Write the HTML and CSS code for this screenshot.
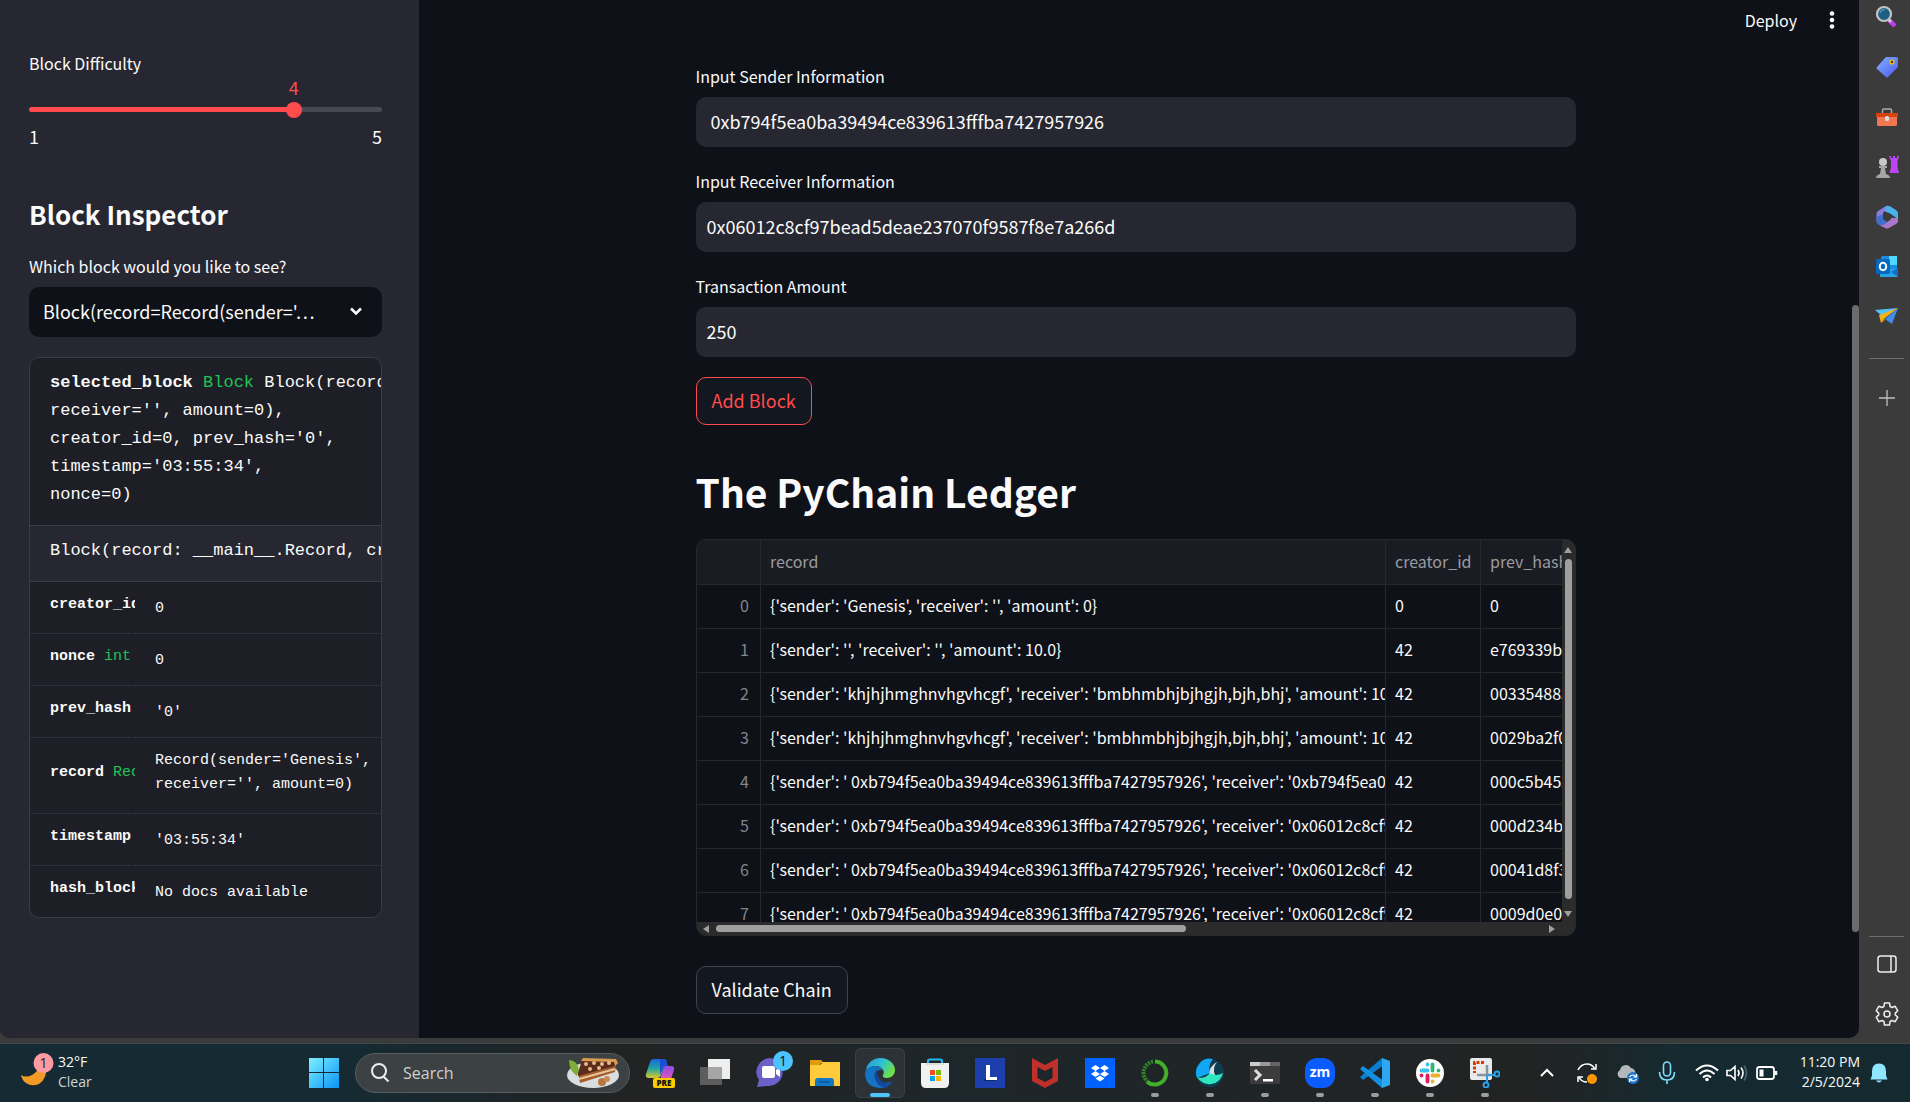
FILE: index.html
```html
<!DOCTYPE html>
<html lang="en">
<head>
<meta charset="utf-8">
<title>PyChain</title>
<link rel="stylesheet" href="styles.css">
</head>
<body>
<div class="desktop">
  <div class="browser">
    <div class="page">
      <aside class="sidebar">
        <div class="slider">
          <label for="difficulty">Block Difficulty</label>
          <div class="rail" style="--fill: 75%">
            <output for="difficulty">4</output>
            <input type="range" id="difficulty" min="1" max="5" value="4">
          </div>
          <div class="ticks"><span>1</span><span>5</span></div>
        </div>
        <h2>Block Inspector</h2>
        <label for="block">Which block would you like to see?</label>
        <div class="select">
          <select id="block"><option>Block(record=Record(sender='…</option></select>
          <svg viewBox="0 0 16 16" width="16" height="16"><path d="M3 5.5 8 10.500l5-5" fill="none" stroke="#fafafa" stroke-width="2.600"/></svg>
        </div>
        <section class="doc">
          <pre class="value"><b>selected_block</b> <i>Block</i> Block(record=Record(sender='Genesis',
receiver='', amount=0),
creator_id=0, prev_hash='0',
timestamp='03:55:34',
nonce=0)</pre>
          <pre class="signature">Block(record: __main__.Record, creator_id: int)</pre>
          <table class="members">
            <tr><th scope="row">creator_id</th><td>0</td></tr>
            <tr><th scope="row">nonce <i>int</i></th><td>0</td></tr>
            <tr><th scope="row">prev_hash</th><td>'0'</td></tr>
            <tr><th scope="row">record <i>Record</i></th><td class="multi">Record(sender='Genesis',<br>receiver='', amount=0)</td></tr>
            <tr><th scope="row">timestamp</th><td>'03:55:34'</td></tr>
            <tr><th scope="row">hash_block</th><td>No docs available</td></tr>
          </table>
        </section>
      </aside>

      <main class="main">
        <header class="toolbar">
          <button type="button" class="plain">Deploy</button>
          <button type="button" class="plain kebab" aria-label="Menu"><svg viewBox="0 0 6 18" width="6" height="18" fill="#fafafa"><circle cx="3" cy="2.500" r="2.300"/><circle cx="3" cy="9" r="2.300"/><circle cx="3" cy="15.500" r="2.300"/></svg></button>
        </header>
        <div class="content">
          <div class="field"><label for="sender">Input Sender Information</label><input type="text" id="sender" value=" 0xb794f5ea0ba39494ce839613fffba7427957926"></div>
          <div class="field"><label for="receiver">Input Receiver Information</label><input type="text" id="receiver" value="0x06012c8cf97bead5deae237070f9587f8e7a266d"></div>
          <div class="field"><label for="amount">Transaction Amount</label><input type="text" id="amount" value="250"></div>
          <button type="button" class="btn active">Add Block</button>
          <h1>The PyChain Ledger</h1>
          <div class="grid">
            <div class="grid-view">
              <table class="ledger">
                <colgroup><col class="c-index"><col><col class="c-creator"><col class="c-hash"></colgroup>
                <thead><tr><th></th><th>record</th><th>creator_id</th><th>prev_hash</th></tr></thead>
                <tbody>
                  <tr><td>0</td><td>{'sender': 'Genesis', 'receiver': '', 'amount': 0}</td><td>0</td><td>0</td></tr>
                  <tr><td>1</td><td>{'sender': '', 'receiver': '', 'amount': 10.0}</td><td>42</td><td>e769339bf</td></tr>
                  <tr><td>2</td><td>{'sender': 'khjhjhmghnvhgvhcgf', 'receiver': 'bmbhmbhjbjhgjh,bjh,bhj', 'amount': 10.0}</td><td>42</td><td>003354885</td></tr>
                  <tr><td>3</td><td>{'sender': 'khjhjhmghnvhgvhcgf', 'receiver': 'bmbhmbhjbjhgjh,bjh,bhj', 'amount': 10.0}</td><td>42</td><td>0029ba2f0</td></tr>
                  <tr><td>4</td><td>{'sender': ' 0xb794f5ea0ba39494ce839613fffba7427957926', 'receiver': '0xb794f5ea0ba</td><td>42</td><td>000c5b453</td></tr>
                  <tr><td>5</td><td>{'sender': ' 0xb794f5ea0ba39494ce839613fffba7427957926', 'receiver': '0x06012c8cf97</td><td>42</td><td>000d234b</td></tr>
                  <tr><td>6</td><td>{'sender': ' 0xb794f5ea0ba39494ce839613fffba7427957926', 'receiver': '0x06012c8cf97</td><td>42</td><td>00041d8f3</td></tr>
                  <tr><td>7</td><td>{'sender': ' 0xb794f5ea0ba39494ce839613fffba7427957926', 'receiver': '0x06012c8cf97</td><td>42</td><td>0009d0e07</td></tr>
                </tbody>
              </table>
            </div>
            <div class="bar-y"><svg viewBox="0 0 10 8" width="10" height="8"><path d="M5 1 9 7H1z"/></svg><span></span><svg viewBox="0 0 10 8" width="10" height="8"><path d="M5 7 9 1H1z"/></svg></div>
            <div class="bar-x"><svg viewBox="0 0 8 10" width="8" height="10"><path d="M1 5 7 1v8z"/></svg><span></span><svg viewBox="0 0 8 10" width="8" height="10"><path d="M7 5 1 1v8z"/></svg></div>
          </div>
          <button type="button" class="btn">Validate Chain</button>
        </div>
      </main>
      <div class="page-scroll"><span></span></div>
    </div>

    <nav class="edgebar">
      <svg viewBox="0 0 24 24"><path d="m14 15 6 6" stroke="#c03cf5" stroke-width="4.500"/><path d="m13.500 14.500 2.500 2.500" stroke="#ccc" stroke-width="3"/><circle cx="9" cy="9" r="7" fill="#1d5f82" stroke="#c4c4c4" stroke-width="2.200"/><path d="M5 8a5 5 0 0 1 5-3.500" stroke="#4c94b5" stroke-width="1.500" fill="none"/></svg>
      <svg viewBox="0 0 24 24"><defs><linearGradient id="tag" x2="1" y2="1"><stop stop-color="#7cb4ff"/><stop offset="1" stop-color="#5257f0"/></linearGradient></defs><path d="M12 2h9q2 0 2 2v7q0 1-1 2L13 22q-1 1-2 0l-9-8q-1-1 0-2l8-9q1-1 2-1z" fill="url(#tag)"/><circle cx="17" cy="7" r="2.600" fill="#f4c20d"/><circle cx="17" cy="7" r="1.200" fill="#333"/></svg>
      <svg viewBox="0 0 24 24"><path d="M7.500 8V5.500Q7.500 4 9 4h6q1.500 0 1.500 1.500V8" fill="none" stroke="#aaa" stroke-width="1.500"/><path d="M2 11h20v8.500q0 1.500-1.500 1.500h-17Q2 21 2 19.500z" fill="#f07850"/><path d="M1 8h22v4H1z" fill="#d6430f"/><rect x="10" y="11" width="4" height="5" rx="1.500" fill="#ddd"/></svg>
      <svg viewBox="0 0 24 24"><path d="M14 1h2v2h2V1h2v2h2V1h2l-1.500 5.500v6L24 18h-9.500l1.500-5.500v-6z" fill="#bb44f5"/><circle cx="8" cy="7" r="4" fill="#c9c9c9"/><path d="M4 11h8v2h-2l1 6q4 1 4 4H1q0-3 4-4l1-6H4z" fill="#a5a5a5"/></svg>
      <svg viewBox="0 0 24 24"><path d="M11 1 3 6Q1.500 7 1.500 9v7q0 2 1.500 3l5 3V9q0-2 2-3l3-2z" fill="#8b7de0"/><path d="M11 1q2-.8 4 .3l6 3.700q2 1 2 3.500V14l-8-5.500-5-2z" fill="#49b1ee"/><path d="M16 13l7 0v3q0 2-2 3l-7 4q-2 1-4 0l-4-2 6-4q4-2 4-4z" fill="#a877cc"/><path d="M1.500 12v4q0 2.500 2 3.500 3 1.500 6-.5l3-2-4.500-3V9z" fill="#416fd0"/><path d="m12 8 4 2v4l-4 2.500L8.500 14v-4z" fill="#3b3b3b"/></svg>
      <svg viewBox="0 0 24 24"><rect x="6" y="1" width="16" height="21" rx="1.500" fill="#1a8fdc"/><path d="M14 1h8v9h-8z" fill="#4fd8ff"/><path d="M5 14h18v8H5z" fill="#27a5e8"/><path d="m16 17 7-4v9z" fill="#0f72c4"/><rect x="1" y="4" width="14" height="15" rx="1.500" fill="#0668bf"/><ellipse cx="8" cy="11.500" rx="3.200" ry="3.700" fill="none" stroke="#fff" stroke-width="2"/></svg>
      <svg viewBox="0 0 24 24"><path d="M0 5 23 3 7 11z" fill="#4fc3f7"/><path d="M23 3 17 19l-7-5z" fill="#3f8cf0"/><path d="M23 3 4 10l2 8 4-5z" fill="#f6b21b"/><path d="m6 18 4-3-1-2z" fill="#c98500"/></svg>
      <hr>
      <svg viewBox="0 0 24 24" stroke="#c0c0c0" stroke-width="1.300"><path d="M12 4v16M4 12h16"/></svg>
      <hr class="low">
      <svg viewBox="0 0 24 24" fill="none" stroke="#eee" stroke-width="1.500"><rect x="3" y="4" width="18" height="16" rx="2.500"/><path d="M16 4v16"/></svg>
      <svg viewBox="0 0 24 24" fill="none" stroke="#eee" stroke-width="1.500" stroke-linejoin="round"><path d="M9.500 1h5l.6 3.500 1.900 1 3.200-1.200 2.600 4.500-2.500 2.300v1.800l2.500 2.300-2.600 4.500-3.200-1.200-1.900 1-.6 3.500h-5l-.6-3.500-1.900-1-3.200 1.200-2.600-4.500 2.500-2.300v-1.800L1.200 8.800l2.600-4.500L7 5.500l1.900-1z"/><circle cx="12" cy="12" r="3"/></svg>
    </nav>
  </div>

  <footer class="taskbar">
    <div class="weather">
      <svg viewBox="0 0 34 40" width="34" height="40"><path d="M26 13q2 13-7 19-7 3-13-1-4-3-5-8 5 3 11 0 6-3 7-10z" fill="#f39a25"/><circle cx="23.500" cy="11" r="10" fill="#ff9aa2"/><text x="23.500" y="16" text-anchor="middle" font-size="14" fill="#222">1</text></svg>
      <p>32°F<br><span>Clear</span></p>
    </div>
    <div class="apps">
      <svg class="start" viewBox="0 0 30 30" width="30" height="30"><defs><linearGradient id="win" x2="1" y2="1"><stop stop-color="#7cf0ff"/><stop offset="1" stop-color="#0a93f5"/></linearGradient></defs><path d="M0 0h14v14H0zM15 0h15v14H15zM0 15h14v15H0zM15 15h15v15H15z" fill="url(#win)"/></svg>
      <div class="search">
        <svg viewBox="0 0 20 20" width="20" height="20" fill="none" stroke="#eee" stroke-width="2"><circle cx="9" cy="8" r="7"/><path d="m13.500 13.500 5 5"/></svg>
        <input type="search" aria-label="Search" placeholder="Search">
        <svg viewBox="0 0 54 32" width="54" height="32"><ellipse cx="27" cy="18" rx="26" ry="13" fill="#d9dde0"/><path d="M3 3q8 0 10 10l-2 6Q3 14 3 3z" fill="#7fae35"/><path d="M12 16 50 6l-1 9-35 11z" fill="#a35c2a"/><path d="M12 16 16 3l35-1-2 7-37 10z" fill="#5b2c1b"/><path d="m15 4 2-3 33 1 2 4-3 3-1-4z" fill="#d99b52"/><path d="m13 22 36-10" stroke="#e8c79a" stroke-width="2"/><g fill="#e5b98c"><circle cx="20" cy="7" r="2"/><circle cx="28" cy="6" r="2"/><circle cx="36" cy="7" r="2"/><circle cx="24" cy="12" r="2"/><circle cx="33" cy="11" r="2"/><circle cx="43" cy="6" r="2"/></g><circle cx="36" cy="25" r="4" fill="#b9773e"/><circle cx="41" cy="22" r="3" fill="#c98b50"/></svg>
      </div>
      <span class="app"><svg viewBox="0 0 30 30"><defs><linearGradient id="co" x2="0" y2="1"><stop stop-color="#1667e0"/><stop offset=".5" stop-color="#21a6a0"/><stop offset="1" stop-color="#d8c82e"/></linearGradient><linearGradient id="co2" x2="0" y2="1"><stop stop-color="#8a4cf0"/><stop offset="1" stop-color="#f25ba8"/></linearGradient></defs><path d="M9 1h10q3 0 2 3l-5 13q-1 3-4 3H4q-4 0-3-4L5 4q1-3 4-3z" fill="url(#co)"/><path d="M20 8h6q4 0 3 4l-3 9q-1 3-4 3h-8l4-12q1-4 2-4z" fill="url(#co2)"/><path d="M15 1h4q3 0 3 4l1 3h-4l-4 9z" fill="#1c4fd0"/><rect x="8" y="20" width="22" height="10" rx="2" fill="#fc0"/><text x="19" y="28" text-anchor="middle" font-size="8" font-weight="800" fill="#111">PRE</text></svg></span>
      <span class="app"><svg viewBox="0 0 30 30"><path d="M0 9h22v18H0z" fill="#5d5d5d"/><path d="M8 1h22v20H8z" fill="#eee"/><path d="M8 9h14v12H8z" fill="#a5a5a5"/></svg></span>
      <span class="app"><svg class="wide" viewBox="0 0 38 38"><path d="M15 8a14 14 0 1 1-3 28l-10 1 2-7A14 14 0 0 1 15 8z" fill="#6a62c8"/><rect x="7" y="16" width="13" height="12" rx="2" fill="#fff"/><path d="m21 20 4-3v10l-4-3z" fill="#fff"/><circle cx="28" cy="11" r="10" fill="#4cc2ff"/><text x="28" y="16" text-anchor="middle" font-size="14" fill="#111">1</text></svg></span>
      <span class="app"><svg viewBox="0 0 30 30"><path d="M0 2h11l3 3h-3L9 8H0z" fill="#e09b0c"/><path d="M0 7h10l3-3h17v24H0z" fill="#ffcb3d"/><path d="M5 28v-5q0-3 3-3h13q3 0 3 3v5z" fill="#0f78c8"/><path d="M9 24h11" stroke="#064b80" stroke-width="1.200"/></svg></span>
      <span class="app current"><svg viewBox="0 0 30 30"><defs><linearGradient id="ed" x2="1" y2=".5"><stop stop-color="#2493e0"/><stop offset=".55" stop-color="#2cc4d0"/><stop offset="1" stop-color="#6ee048"/></linearGradient></defs><path d="M1 12C2 5 8 0 15 0c9 0 15 6 15 12 0 5-4 8-8 8-3 0-5-1-4-3 2-3 0-8-6-9q-7 0-11 4z" fill="url(#ed)"/><path d="M0 15q2-7 11-7 5 1 7 4-6-1-7 4-1 9 9 9l7-1q-4 6-12 6Q0 29 0 15z" fill="#1673c4"/><path d="M12 11q-4 5-2 10 3 8 10 9 5-2 8-6-8 3-13-2-4-5-3-11z" fill="#114a9c"/></svg></span>
      <span class="app"><svg viewBox="0 0 30 30"><path d="M8 8V3q0-1.500 1.500-1.500h11Q22 1.500 22 3v5" fill="none" stroke="#2bb3f0" stroke-width="2.200"/><path d="M1 5h28v20q0 5-5 5H6q-5 0-5-5z" fill="#f1f1f1"/><path d="M10 12h5v5h-5z" fill="#f25022"/><path d="M16 12h5v5h-5z" fill="#7fba00"/><path d="M10 18h5v5h-5z" fill="#00a4ef"/><path d="M16 18h5v5h-5z" fill="#ffb900"/><path d="M6 5h18v2H6z" fill="#ddd"/></svg></span>
      <span class="app"><svg viewBox="0 0 30 30"><path d="M0 0h30v30H0z" fill="#1d3fae"/><path d="m8 23 4-4h9v4z" fill="#122b66"/><path d="M11 7h4v12h7v3H11z" fill="#fff"/></svg></span>
      <span class="app"><svg viewBox="0 0 30 30"><path d="m2 0 13 7L28 0v23l-13 7-13-7zM7.500 9v11l7.500 4 7.500-4V9L15 13z" fill="#c0302b" fill-rule="evenodd"/></svg></span>
      <span class="app"><svg viewBox="0 0 30 30"><path d="M0 0h30v30H0z" fill="#0061fe"/><path d="m10.500 7 4.500 3-4.500 3L6 10zM19.500 7l4.500 3-4.500 3-4.500-3zM10.500 13l4.500 3-4.500 3L6 16zM19.500 13l4.500 3-4.500 3-4.500-3zM15 17.500l4.500 3-4.500 3-4.500-3z" fill="#fff"/></svg></span>
      <span class="app running"><svg viewBox="0 0 30 30" fill="none"><path d="M15 3.500a11.500 11.500 0 1 1-8 20" stroke="#43b02a" stroke-width="4"/><path d="M8 24A11.500 11.500 0 0 1 14 3.500" stroke="#2f8a22" stroke-width="4" stroke-dasharray="2 1"/></svg></span>
      <span class="app running"><svg viewBox="0 0 30 30"><circle cx="15" cy="15" r="14" fill="#0d3d52"/><path d="M2 20A14 14 0 0 1 18 1q-5 5-3 14z" fill="#12a7f5"/><path d="M22 4q-5 6-2 13l-6 1q0-10 8-14z" fill="#d7dde0"/><path d="M2 19q7 3 13-4 6 4 13 0a14 14 0 0 1-26 4z" fill="#2ee6c0"/></svg></span>
      <span class="app running"><svg viewBox="0 0 30 30"><path d="M0 4h30v21q0 1-1 1H1q-1 0-1-1z" fill="#3c3c3c"/><path d="M0 4h10v4H0z" fill="#ccc"/><path d="M10 4h10v4H10z" fill="#999"/><path d="M20 4h10v4H20z" fill="#666"/><path d="m5 12 5 5-5 5" fill="none" stroke="#ddd" stroke-width="3"/><path d="M13 21h10v2.500H13z" fill="#fff"/></svg></span>
      <span class="app running"><svg viewBox="0 0 30 30"><rect width="30" height="30" rx="12" fill="#0b5cff"/><text x="15" y="19" text-anchor="middle" font-size="14" font-weight="700" fill="#fff">zm</text></svg></span>
      <span class="app running"><svg viewBox="0 0 30 30"><path d="M22 0 0 19l3 3L24 7z" fill="#0a7fd0"/><path d="M22 30 0 11l3-3 21 15z" fill="#1490e0"/><path d="m22 0 8 3v24l-8 3z" fill="#2da8f5"/></svg></span>
      <span class="app running"><svg viewBox="0 0 30 30"><circle cx="15" cy="15" r="14" fill="#fff"/><g stroke-width="3.800" stroke-linecap="round"><path d="M12.500 6.500v0M6.500 12.500h6" stroke="#36c5f0"/><path d="M17.500 6.500v6M23.500 12.500v0" stroke="#2eb67d"/><path d="M17.500 17.500h6M17.500 23.500v0" stroke="#ecb22e"/><path d="M12.500 17.500v6M6.500 17.500v0" stroke="#e01e5a"/></g></svg></span>
      <span class="app running"><svg viewBox="0 0 30 30"><rect width="22" height="22" rx="2" fill="#e8eaec"/><path d="M14 4.500H4.500V15" fill="none" stroke="#d83b01" stroke-width="3" stroke-dasharray="3 1.500"/><path d="M17 7v12M7 17h14" stroke="#8a949c" stroke-width="2.500"/><g fill="none" stroke="#2aa0ea" stroke-width="2"><circle cx="27" cy="16" r="2.500"/><circle cx="16" cy="27" r="2.500"/><path d="m17 17 7 0M17 17v8"/></g></svg></span>
    </div>
    <div class="tray">
      <svg viewBox="0 0 24 24" fill="none" stroke="#fff" stroke-width="2"><path d="m6 15 6-6 6 6"/></svg>
      <svg viewBox="0 0 24 24" fill="none" stroke="#fff" stroke-width="1.500"><path d="M3 9q3-6 9-6 5 0 8 5M21 3v5h-5M12 21q-6 0-8-5M3 21v-5h5"/><circle cx="17" cy="18" r="5" fill="#ff9500" stroke="none"/></svg>
      <svg viewBox="0 0 24 24"><path d="M5 17a4.500 4.500 0 0 1 0-8 6 6 0 0 1 11-2 5 5 0 0 1 4 7v3z" fill="#b5b8ba"/><circle cx="18" cy="17" r="6" fill="#1b74d0"/><path d="M14.500 16q3-4 7 0m0-3v3h-3M21.500 18q-3 4-7 0m0 3v-3h3" fill="none" stroke="#fff" stroke-width="1.200"/></svg>
      <svg viewBox="0 0 24 24" fill="none" stroke="#7fdcff" stroke-width="1.600"><rect x="8.500" y="1" width="7" height="14" rx="3.500"/><path d="M4.500 11q0 8 7.500 8t7.500-8M12 19v4"/></svg>
      <div class="status">
        <svg viewBox="0 0 24 24" fill="none" stroke="#fff" stroke-width="2"><path d="M1 9.500q11-10 22 0M4.500 13q7.500-7 15 0M8 16.500q4-4 8 0"/><circle cx="12" cy="18.500" r="1.800" fill="#fff" stroke="none"/></svg>
        <svg viewBox="0 0 24 24" fill="none" stroke="#fff" stroke-width="1.600"><path d="M2 9.500h3.500L10 5.500v13L5.500 14.500H2zM13 9q2 3 0 6M16 6.500q4 5.500 0 11"/><path d="M19 4.500q5 7.500 0 15" stroke="#52646a"/></svg>
        <svg viewBox="0 0 24 24" fill="none" stroke="#fff" stroke-width="1.800"><rect x="2" y="6" width="17" height="12" rx="2.500"/><path d="M4.500 8.500h4v7h-4z" fill="#fff" stroke="none"/><path d="M21 10v4" stroke-width="2.500"/></svg>
      </div>
      <p>11:20 PM<br>2/5/2024</p>
      <svg viewBox="0 0 24 24" fill="#8fe6ff"><path d="M12 2.500q7 0 7 8v4l1.500 4h-17l1.500-4v-4q0-8 7-8zM9 19.500h6q-3 4-6 0z"/></svg>
    </div>
  </footer>
</div>
</body>
</html>
```
FILE: styles.css
```css
* { box-sizing: border-box; }

body {
  margin: 0;
  background: #3b3b3b;
  color: #fafafa;
  font-family: "Noto Sans CJK JP", "Open Sans", sans-serif;
  font-size: 16px;
}

h1, h2, p, pre { margin: 0; }
i { font-style: normal; color: #21c354; }
button, input, select { font: inherit; color: inherit; }

.desktop {
  display: grid;
  grid-template-rows: minmax(0, 1fr) 59px;
  height: 100vh;
  overflow: hidden;
}

.browser { display: flex; min-height: 0; padding-bottom: 5px; }

.page {
  display: flex;
  flex: 1;
  min-width: 0;
  background: #0e1117;
  border-radius: 0 0 10px 10px;
  overflow: hidden;
}

label { display: block; line-height: 28px; margin-bottom: 7px; }

/* Sidebar */
.sidebar {
  flex: 0 0 419px;
  min-width: 0;
  padding: 49px 37px 0 29px;
  background: #262730;
}

.slider label { margin-bottom: 30px; }

.rail {
  position: relative;
  display: flex;
  align-items: center;
  height: 5px;
  border-radius: 3px;
  background: linear-gradient(to right, #ff4b4b var(--fill), #464853 var(--fill));
}

.rail output {
  position: absolute;
  left: var(--fill);
  bottom: 13px;
  transform: translateX(-50%);
  line-height: 24px;
  font-size: 18px;
  color: #ff4b4b;
}

.rail input {
  flex: 1 0 auto;
  appearance: none;
  height: 16px;
  margin: 0 -8px;
  background: none;
}

.rail input::-webkit-slider-thumb {
  appearance: none;
  width: 16px;
  height: 16px;
  border-radius: 50%;
  background: #ff4b4b;
}

.ticks {
  display: flex;
  justify-content: space-between;
  margin-top: 10px;
  line-height: 28px;
  font-size: 18px;
}

h2 { margin: 47px 0 21px; font-size: 26px; line-height: 34px; font-weight: 600; }

.select {
  display: flex;
  align-items: center;
  height: 50px;
  padding: 0 18px 2px 14px;
  border-radius: 10px;
  background: #0e1117;
  font-size: 18px;
}

.select select {
  flex: 1;
  min-width: 0;
  padding: 0;
  appearance: none;
  border: 0;
  background: none;
}

.doc {
  margin-top: 20px;
  border: 1px solid #3a3b44;
  border-radius: 10px;
  overflow: hidden;
  background: #1e1f26;
  font-family: "Liberation Mono", monospace;
}

.doc pre {
  font-family: inherit;
  font-size: 17px;
  line-height: 28px;
  padding: 11px 0 16px 20px;
  border-bottom: 1px solid #3a3b44;
  overflow: hidden;
}

.doc .signature { background: #262730; }

.members {
  width: 100%;
  table-layout: fixed;
  border-collapse: collapse;
  font-size: 15px;
  line-height: 24px;
}

.members tr + tr { border-top: 1px dotted #3a3b44; }

.members th {
  width: 105px;
  padding: 11px 0 16px 20px;
  overflow: hidden;
  white-space: nowrap;
  text-align: left;
}

.members th i { font-weight: 400; }
.members td { padding: 15px 0 12px 20px; white-space: nowrap; }
.members .multi { padding: 11px 0 16px 20px; }

/* Main */
.main { flex: 1; min-width: 0; }

.toolbar {
  display: flex;
  justify-content: flex-end;
  align-items: center;
  gap: 32px;
  height: 40px;
  padding-right: 17px;
}

.plain { padding: 0; border: 0; background: none; line-height: 24px; }
.kebab { display: flex; }

.content {
  max-width: 880px;
  margin: 0 auto;
  padding-top: 22px;
}

.field { margin-bottom: 20px; }

.field input {
  width: 100%;
  height: 50px;
  padding: 0 11px 2px;
  border: 0;
  border-radius: 10px;
  background: #262730;
  font-size: 18px;
}

.btn {
  height: 48px;
  padding: 0 15px 2px;
  border: 1px solid #41444c;
  border-radius: 10px;
  background: #131720;
  font-size: 18px;
}

.btn.active { border-color: #ff4b4b; color: #ff4b4b; }

h1 { margin: 20px 0; padding: 19px 0 1px; font-size: 39px; line-height: 54px; font-weight: 600; }

.grid {
  display: grid;
  grid-template-columns: minmax(0, 1fr) 13px;
  grid-template-rows: 382px 13px;
  margin-bottom: 30px;
  border: 1px solid #26282d;
  border-radius: 10px;
  overflow: hidden;
  background: #2b2b2b;
}

.grid-view { overflow: hidden; background: #0e1117; }

.ledger {
  width: 100%;
  table-layout: fixed;
  border-collapse: collapse;
  font-size: 16px;
}

.c-index { width: 64px; }
.c-creator { width: 95px; }
.c-hash { width: 81px; }

.ledger th, .ledger td {
  height: 44px;
  padding: 0 0 2px 9px;
  border-bottom: 1px solid #26282d;
  overflow: hidden;
  white-space: nowrap;
  text-align: left;
  font-weight: 400;
}

.ledger th + th, .ledger td + td { border-left: 1px solid #26282d; }
.ledger th { background: #1a1c24; color: #9a9b9f; }
.ledger td:first-child { padding-right: 11px; text-align: right; color: #83858a; }

.bar-x, .bar-y { display: flex; align-items: center; justify-content: space-between; fill: #9f9f9f; }
.bar-y { flex-direction: column; padding: 6px 0 4px; }
.bar-x { padding: 0 6px 0 5px; }
.bar-x span, .bar-y span { border-radius: 4px; background: #9f9f9f; }
.bar-y span { width: 7px; height: 340px; margin-bottom: 6px; }
.bar-x span { width: 470px; height: 7px; margin: 0 auto 0 6px; }

.page-scroll { flex: 0 0 7px; padding-top: 305px; }
.page-scroll span { display: block; height: 627px; border-radius: 4px; background: #6b6c70; }

/* Browser side strip */
.edgebar {
  flex: 0 0 51px;
  display: flex;
  flex-direction: column;
  align-items: center;
  gap: 26px;
  padding: 5px 0 12px 4px;
}

.edgebar svg { flex: none; width: 24px; height: 24px; }
.edgebar hr { width: 35px; height: 1px; margin: 3px 0 1px; border: 0; background: #6d6d6d; }
.edgebar .low { margin-top: auto; margin-bottom: -11px; }

/* Taskbar */
.taskbar {
  display: flex;
  align-items: center;
  border-top: 1px solid #3f4a4e;
  background: linear-gradient(to right, #152a33 0, #152a33 18%, #222323 32%, #1d262a 50%, #222323 80%, #152a30 88%, #152a30);
  font-family: "Open Sans", sans-serif;
  font-size: 14px;
  line-height: 20px;
}

.weather { display: flex; gap: 4px; flex: 0 0 309px; padding: 0 0 2px 20px; }
.weather span { color: #cfd3d5; }

.apps { display: flex; align-items: center; }
.start { margin-right: 16px; }

.search {
  display: flex;
  align-items: center;
  gap: 13px;
  width: 275px;
  height: 40px;
  padding: 0 9px 0 14px;
  border: 1px solid #575c5e;
  border-radius: 20px;
  background: #3c4144;
}

.search input { flex: 1; min-width: 0; padding: 0; border: 0; background: none; font-size: 16px; }
.search input::placeholder { color: #d0d0d0; }

.app {
  position: relative;
  display: flex;
  align-items: center;
  justify-content: center;
  width: 50px;
  height: 50px;
  margin-left: 5px;
  border-radius: 6px;
}

.app svg { width: 30px; height: 30px; }
.app .wide { width: 38px; height: 38px; margin: -8px -6px 0 2px; }
.app.current { background: #2c3235; box-shadow: inset 0 0 0 1px #3a3f42; }

.app.running::after, .app.current::after {
  content: "";
  position: absolute;
  bottom: 1px;
  width: 8px;
  height: 4px;
  border-radius: 2px;
  background: #9a9c9e;
}

.app.current::after { width: 20px; background: #4cc2ff; }

.tray { display: flex; align-items: center; gap: 16px; margin-left: auto; padding-right: 19px; }
.tray svg { width: 24px; height: 24px; }
.tray p { margin-left: 5px; padding-bottom: 2px; text-align: right; }
.tray > p + svg { margin-left: -9px; }
.status { display: flex; gap: 6px; }
```
